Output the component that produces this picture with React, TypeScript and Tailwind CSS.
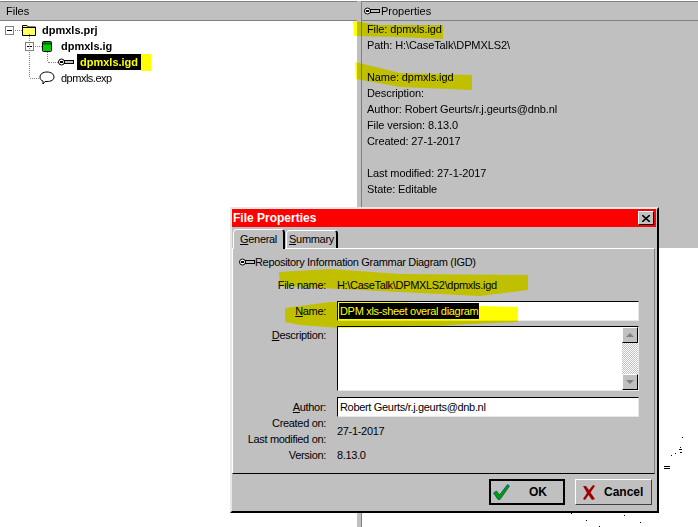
const font = "font-['Liberation_Sans',Arial,sans-serif]";

function KeyIcon({ className }: { className?: string }) {
  return (
    <svg width="16" height="8" viewBox="0 0 16 8" className={className}>
      <circle cx="3.5" cy="4" r="3" fill="#fff" stroke="#000" strokeWidth="1" />
      <rect x="2" y="3" width="3" height="2" fill="#000" />
      <rect x="6.5" y="2.5" width="9" height="3" fill="#c0c0c0" stroke="#000" strokeWidth="1" />
    </svg>
  );
}

function Marker({ points }: { points: string }) {
  return <polygon points={points} fill="#ffff00" />;
}

function ExpandBox() {
  return (
    <span className="w-[9px] h-[9px] border border-[#808080] bg-white flex items-center justify-center shrink-0">
      <span className="block w-[5px] h-px bg-black" />
    </span>
  );
}

function Field({ hot, rest, children, className }: { hot?: string; rest: string; children?: React.ReactNode; className?: string }) {
  return (
    <div className={`flex items-center ${className ?? ""}`}>
      <div className="w-[87px] text-right shrink-0">
        {hot && <u>{hot}</u>}
        {rest}
      </div>
      <div className="ml-[11px] grow min-w-0">{children}</div>
    </div>
  );
}

const sunken = "border border-t-black border-l-black border-r-[#e8e8e8] border-b-[#e8e8e8] bg-white";
const raised = "bg-[#c0c0c0] border border-t-white border-l-white border-r-black border-b-black flex items-center justify-center";

export default function App() {
  return (
    <div className={`${font} relative w-[698px] h-[527px] overflow-hidden bg-white text-[11px] text-black`}>
      <div className="flex h-full pt-px">
        {/* left pane */}
        <div className="w-[357px] shrink-0 flex flex-col border-t border-[#808080]">
          <div className="h-[19px] bg-[#c0c0c0] border-b border-[#808080] pl-[6px] leading-[19px]">Files</div>
          <div className="relative pt-px">
            {/* tree connector lines */}
            <span className="absolute left-[29px] top-[13px] h-[43px] border-l border-dotted border-[#808080]" />
            <span className="absolute left-[47px] top-[29px] h-[11px] border-l border-dotted border-[#808080]" />
            <div className="flex items-center h-4 pl-[5px]">
              <ExpandBox />
              <span className="w-[7px] ml-px border-t border-dotted border-[#808080]" />
              <svg width="14" height="12" viewBox="0 0 14 12">
                <path d="M0.5 11.5 V1.5 H5 L6.5 3 H13.5 V11.5 Z" fill="#ffff66" stroke="#000" />
                <path d="M1 3.5 H13" stroke="#000" />
              </svg>
              <span className="ml-[6px] font-bold leading-4">dpmxls.prj</span>
            </div>
            <div className="flex items-center h-4 pl-[25px]">
              <ExpandBox />
              <span className="w-[7px] ml-px border-t border-dotted border-[#808080]" />
              <svg width="10" height="11" viewBox="0 0 10 11">
                <rect x="0.5" y="0.5" width="9" height="10" rx="1" fill="#00d000" stroke="#000" />
                <path d="M1 2.5 H9" stroke="#006000" strokeWidth="2" />
              </svg>
              <span className="ml-[9px] font-bold leading-4">dpmxls.ig</span>
            </div>
            <div className="flex items-center h-4 pl-[48px]">
              <span className="w-[10px] border-t border-dotted border-[#808080]" />
              <KeyIcon />
              <span className="bg-black text-[#ffff00] font-bold leading-4 px-[3px] ml-[3px]">dpmxls.igd</span>
              <span className="bg-[#ffff00] w-[10px] h-[17px]" />
            </div>
            <div className="flex items-center h-4 pl-[30px]">
              <span className="w-[9px] border-t border-dotted border-[#808080]" />
              <svg width="16" height="14" viewBox="0 0 16 14">
                <path d="M1 6 C1 3 4 1 8 1 C12 1 15 3 15 6 C15 9 12 10.5 8 10.5 L6 10.5 L4 13 L4 10 C2 9.5 1 8 1 6 Z" fill="#fff" stroke="#000" />
              </svg>
              <span className="ml-[6px] leading-4 tracking-[-0.5px]">dpmxls.exp</span>
            </div>
          </div>
        </div>
        {/* splitter */}
        <div className="w-[5px] shrink-0 bg-[#c0c0c0] border-r border-[#808080]" />
        {/* right pane */}
        <div className="grow h-[247px] bg-[#c0c0c0] flex flex-col border-t border-[#808080]">
          <div className="h-[19px] border-b border-[#808080] flex items-center pl-[2px]">
            <KeyIcon />
            <span className="ml-px">Properties</span>
          </div>
          <div className="pl-[5px] leading-4 tracking-[-0.1px]">
            <div>File: dpmxls.igd</div>
            <div>Path: H:\CaseTalk\DPMXLS2\</div>
            <div className="h-4" />
            <div>Name: dpmxls.igd</div>
            <div>Description:</div>
            <div>Author: Robert Geurts/r.j.geurts@dnb.nl</div>
            <div>File version: 8.13.0</div>
            <div>Created: 27-1-2017</div>
            <div className="h-4" />
            <div>Last modified: 27-1-2017</div>
            <div>State: Editable</div>
          </div>
        </div>
      </div>

      {/* highlighter strokes on the properties pane */}
      <svg className="absolute left-0 top-0 pointer-events-none mix-blend-multiply" width="698" height="527">
        <Marker points="353,21 380,25 443,25 443,39 400,37 354,36" />
        <Marker points="355,62 400,73 472,75 472,90 400,87 356,79" />
      </svg>

      {/* dialog */}
      <div className="absolute left-[230px] top-[207px] w-[429px] h-[306px] bg-[#c0c0c0] border-r-2 border-b-2 border-black border-l-2 border-l-[#e8e8e8] border-t-2 border-t-[#e8e8e8] flex flex-col">
        <div className="h-[18px] bg-[#ff0000] flex items-center justify-between pl-px pr-[2px] mr-px shrink-0">
          <span className="text-white font-bold text-[12px]">File Properties</span>
          <span className={`${raised} w-[16px] h-[14px]`}>
            <svg width="8" height="7" viewBox="0 0 8 7"><path d="M0 0 L8 7 M8 0 L0 7" stroke="#000" strokeWidth="1.6" /></svg>
          </span>
        </div>
        <div className="tracking-[-0.32px] flex flex-col grow">
          <div className="flex h-[21px] items-end shrink-0 pl-px">
            <div className="h-[20px] w-[52px] bg-[#c0c0c0] border-t border-l border-white border-r-2 border-r-black rounded-t-sm text-center leading-[18px] relative top-px z-10">
              <u>G</u>eneral
            </div>
            <div className="h-[18px] w-[52px] ml-px border-t border-l border-white border-r-2 border-r-black rounded-t-sm text-center leading-[17px]">
              <u>S</u>ummary
            </div>
          </div>
          <div className="h-[226px] mr-[2px] border-t border-l border-white border-r border-b border-r-[#808080] border-b-black pl-[6px] pr-[15px] flex flex-col shrink-0">
            <div className="flex items-center h-4 mt-[5px]">
              <KeyIcon />
              <span>Repository Information Grammar Diagram (IGD)</span>
            </div>
            <Field rest="File name:" className="mt-[7px] h-4">H:\CaseTalk\DPMXLS2\dpmxls.igd</Field>
            <Field hot="N" rest="ame:" className="mt-[8px]">
              <div className={`${sunken} h-[20px] pl-px pt-px`}>
                <div className="bg-black text-[#ffff00] w-fit leading-[16px] px-px">DPM xls-sheet overal diagram</div>
              </div>
            </Field>
            <div className="flex mt-[5px]">
              <div className="w-[87px] text-right shrink-0 leading-4 pt-px"><u>D</u>escription:</div>
              <div className={`${sunken} ml-[11px] grow h-[65px] flex justify-end`}>
                <div className="w-[16px] h-full flex flex-col bg-[repeating-conic-gradient(#fff_0_25%,#c0c0c0_0_50%)] bg-[length:2px_2px]">
                  <div className={`${raised} h-[16px]`}>
                    <span className="block w-0 h-0 border-x-[4px] border-x-transparent border-b-[4px] border-b-[#808080]" />
                  </div>
                  <div className="grow" />
                  <div className={`${raised} h-[16px]`}>
                    <span className="block w-0 h-0 border-x-[4px] border-x-transparent border-t-[4px] border-t-[#808080]" />
                  </div>
                </div>
              </div>
            </div>
            <Field hot="A" rest="uthor:" className="mt-[6px]">
              <div className={`${sunken} h-[20px] pl-[2px] leading-[18px]`}>Robert Geurts/r.j.geurts@dnb.nl</div>
            </Field>
            <div className="flex -mt-[2px]">
              <div className="w-[87px] text-right shrink-0 leading-4">
                <div>Created on:</div>
                <div>Last modified on:</div>
              </div>
              <div className="ml-[11px] self-center">27-1-2017</div>
            </div>
            <Field rest="Version:" className="leading-4">8.13.0</Field>
          </div>
        </div>
        <div className="flex justify-end gap-[10px] pr-[5px] mb-[6px] font-bold text-[12px]">
          <button className="w-[76px] h-[26px] bg-[#c0c0c0] border-2 border-black flex items-center pl-[2px]">
            <svg width="17" height="16" viewBox="0 0 17 16"><path d="M0.5 9 L3.5 7 L6.5 11 L14.5 0.5 L16.5 2 L7 15.5 L5 15.5 Z" fill="#00a000" stroke="#004080" strokeWidth="0.7" /></svg>
            <span className="ml-[19px]">OK</span>
          </button>
          <button className="w-[77px] h-[26px] bg-[#c0c0c0] border border-white border-r-[#404040] border-b-[#404040] flex items-center pl-[6px]">
            <svg width="14" height="15" viewBox="0 0 14 15"><path d="M1 1 L4 1 L7 5 L11 0 L13 1 L8.5 7.5 L13 14 L10 15 L6.5 10 L3 15 L1 14 L5 8 Z" fill="#a00000" /></svg>
            <span className="ml-[8px]">Cancel</span>
          </button>
        </div>
      </div>

      {/* highlighter strokes on the dialog and stray pixels around it */}
      <svg className="absolute left-0 top-0 pointer-events-none mix-blend-multiply" width="698" height="527">
        <Marker points="279,272 330,269 400,274 528,275 528,290 480,296 280,286" />
        <Marker points="285,308 330,302 400,302 480,306 518,307 518,322 470,324 420,327 340,328 300,325 285,322" />
        <path d="M682 437h1v1h-1z M680 447h1v1h-1z M679 449h3v1h-3z M680 452h2v1h-2z M675 453h1v1h-1z M671 455h1v1h-1z M664 466h6v1h-6z M664 468h6v1h-6z M571 513h1v1h-1z M586 520h1v1h-1z M599 526h1v1h-1z M624 515h1v1h-1z M640 522h1v1h-1z" fill="#000" />
      </svg>
    </div>
  );
}
